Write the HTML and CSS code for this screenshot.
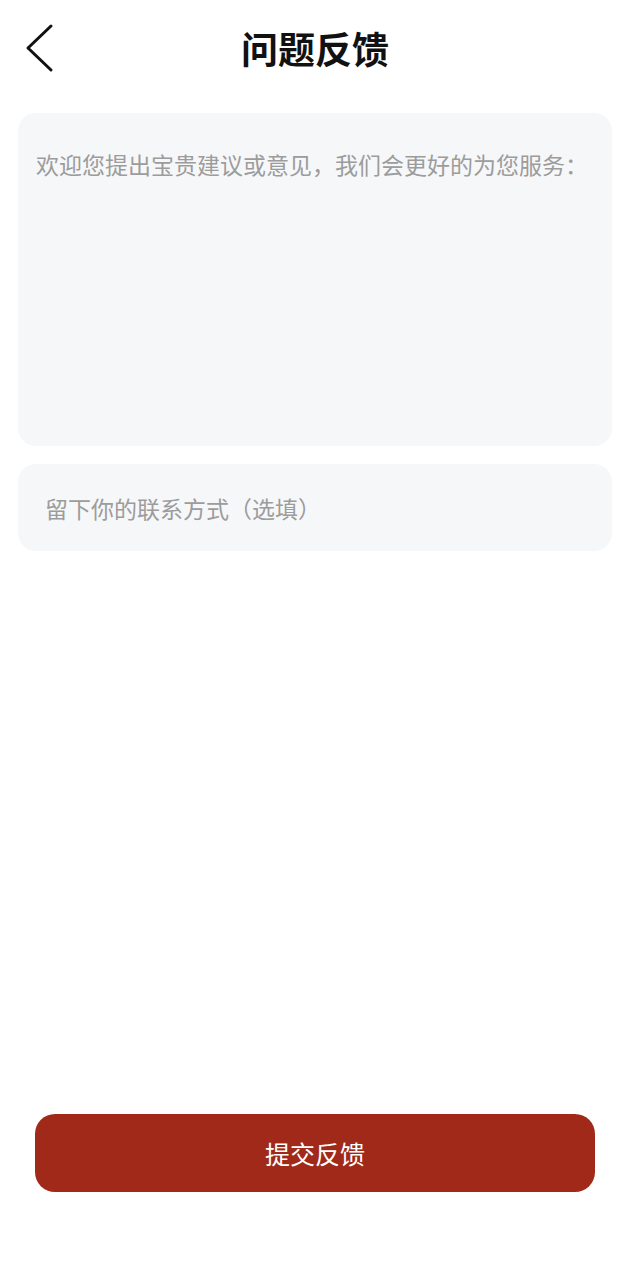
FILE: index.html
```html
<!DOCTYPE html>
<html lang="zh-CN">
<head>
<meta charset="utf-8">
<title>问题反馈</title>
<link rel="stylesheet" href="styles.css">
</head>
<body>
<div class="page">
  <header class="header">
    <span class="back" aria-label="返回">
      <svg width="34" height="50" viewBox="0 0 34 50">
        <polyline points="29,3 6,25 29,47" fill="none" stroke="#111" stroke-width="3" stroke-linecap="round" stroke-linejoin="round"/>
      </svg>
    </span>
    <h1 class="title">问题反馈</h1>
  </header>
  <main class="form">
    <div class="field field-area"><span class="placeholder">欢迎您提出宝贵建议或意见，我们会更好的为您服务：</span></div>
    <div class="field field-line"><span class="placeholder">留下你的联系方式（选填）</span></div>
  </main>
  <footer class="footer">
    <button class="submit" type="button">提交反馈</button>
  </footer>
</div>
</body>
</html>
```
FILE: styles.css
```css
* { box-sizing: border-box; }
html, body { margin: 0; padding: 0; background: #fff; }
body {
  font-family: "Noto Sans CJK SC", "Noto Sans", sans-serif;
  color: #111;
}
.page {
  width: 630px;
  height: 1280px;
  display: flex;
  flex-direction: column;
}
.header {
  position: relative;
  height: 96px;
  display: flex;
  align-items: center;
  justify-content: center;
}
.back {
  position: absolute;
  left: 22px;
  top: 23px;
  width: 34px;
  height: 50px;
  display: block;
}
.back svg { display: block; }
.title {
  margin: 0;
  font-size: 37px;
  font-weight: 700;
  line-height: 1;
  letter-spacing: 0;
}
.form {
  padding: 17px 18px 0;
  display: flex;
  flex-direction: column;
  gap: 18px;
}
.field {
  background: #f6f7f9;
  border-radius: 18px;
}
.field-area {
  height: 333px;
  padding: 35px 18px 0;
}
.field-line {
  height: 87px;
  padding: 0 27px;
  display: flex;
  align-items: center;
}
.placeholder {
  display: block;
  font-size: 23px;
  line-height: 32px;
  color: #9c9c9c;
}
.footer {
  margin-top: auto;
  padding: 0 35px 88px;
}
.submit {
  display: block;
  width: 100%;
  height: 78px;
  border: 0;
  border-radius: 20px;
  background: #a0291a;
  color: #fff;
  font-family: "Noto Sans CJK SC", "Noto Sans", sans-serif;
  font-size: 25px;
  line-height: 1;
  padding: 0;
}
```
